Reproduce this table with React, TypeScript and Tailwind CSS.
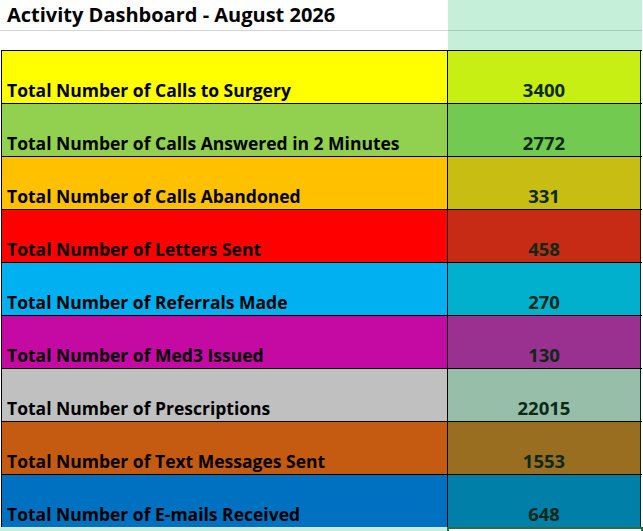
const rows = [
  { label: 'Total Number of Calls to Surgery', value: '3400', a: 'bg-[#ffff00]', b: 'bg-[#c7ef13]' },
  { label: 'Total Number of Calls Answered in 2 Minutes', value: '2772', a: 'bg-[#92d050]', b: 'bg-[#72ca51]' },
  { label: 'Total Number of Calls Abandoned', value: '331', a: 'bg-[#ffc000]', b: 'bg-[#c7bd13]' },
  { label: 'Total Number of Letters Sent', value: '458', a: 'bg-[#ff0000]', b: 'bg-[#c72a15]' },
  { label: 'Total Number of Referrals Made', value: '270', a: 'bg-[#00b0f0]', b: 'bg-[#00b0cd]' },
  { label: 'Total Number of Med3 Issued', value: '130', a: 'bg-[#c50aa4]', b: 'bg-[#9a308f]' },
  { label: 'Total Number of Prescriptions', value: '22015', a: 'bg-[#c0c0c0]', b: 'bg-[#96bea9]' },
  { label: 'Total Number of Text Messages Sent', value: '1553', a: 'bg-[#c55a11]', b: 'bg-[#9a6e20]' },
  { label: 'Total Number of E-mails Received', value: '648', a: 'bg-[#0070c0]', b: 'bg-[#007fa9]' },
];

export default function App() {
  return (
    <div className="w-[643px] h-[531px] overflow-hidden bg-white font-['Open_Sans',sans-serif] font-bold text-[17.5px] leading-[20px]">
      {/* title row */}
      <div className="flex h-[31px]">
        <div className="w-[448px] border-b border-[#d4d4d4] pl-[7px] pt-[3px] text-[20px] leading-[24px] text-black whitespace-nowrap">
          Activity Dashboard - August 2026
        </div>
        <div className="w-[194px] bg-[#c6efda] border-b border-[#a5cdb8]" />
      </div>
      {/* blank row */}
      <div className="flex h-[19px]">
        <div className="w-[448px]" />
        <div className="w-[194px] bg-[#c6efda]" />
      </div>

      <div className="ml-px w-[641px] border-t border-black">
        {rows.map((r) => (
          <div key={r.label} className="flex h-[53px] border-b border-black">
            <div className={`${r.a} w-[447px] border-l border-r border-black flex items-end pl-[5px] pb-[3px] text-black whitespace-nowrap`}>
              {r.label}
            </div>
            <div className={`${r.b} w-[193px] border-r border-[#002813] flex items-end justify-center pb-[3px] text-[18.5px] text-[#0c2a18]`}>
              {r.value}
            </div>
          </div>
        ))}
      </div>

      {/* next row: active cell */}
      <div className="flex h-[4px] -mt-px relative">
        <div className="w-[447px] bg-[#c6efda]" />
        <div className="w-[196px] bg-white border-t-2 border-l-2 border-r-2 border-[#217346]" />
      </div>
    </div>
  );
}
